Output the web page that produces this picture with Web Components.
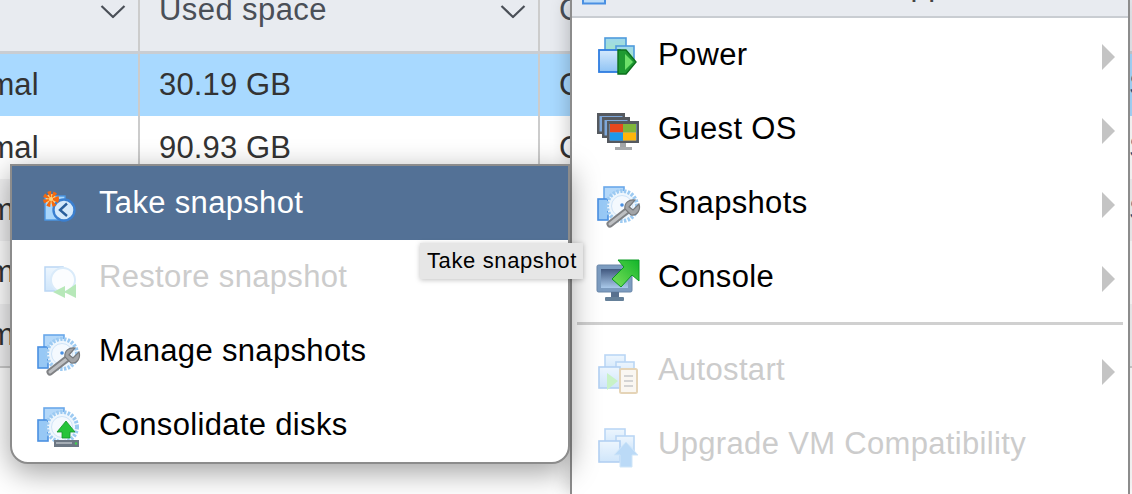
<!DOCTYPE html>
<html>
<head>
<meta charset="utf-8">
<title>VM actions</title>
<style>
    html, body {
        margin: 0;
        height: 100%;
        overflow: hidden;
        background: #fff;
        font-family: "Liberation Sans", Arial, sans-serif;
    }
    #stage {
        position: relative;
        width: 1132px;
        height: 494px;
        overflow: hidden;
    }
    #actions { position: absolute; left: 570px; top: 0; width: 560px; height: 494px; z-index: 1; --item-gap: 19px; }
    #snapshots { position: absolute; left: 10px; top: 164px; width: 560px; z-index: 2; border-radius: 0 0 18px 18px; }
    #tip { position: absolute; left: 420px; top: 243px; z-index: 3; }
</style>
</head>
<body>
<div id="stage">
    <vm-grid>
        <vm-grid-row head>
            <vm-grid-cell sort></vm-grid-cell>
            <vm-grid-cell sort>Used space</vm-grid-cell>
            <vm-grid-cell>C</vm-grid-cell>
            <vm-grid-cell></vm-grid-cell>
        </vm-grid-row>
        <vm-grid-row selected>
            <vm-grid-cell>Normal</vm-grid-cell>
            <vm-grid-cell>30.19 GB</vm-grid-cell>
            <vm-grid-cell>C</vm-grid-cell>
            <vm-grid-cell link>S</vm-grid-cell>
        </vm-grid-row>
        <vm-grid-row>
            <vm-grid-cell>Normal</vm-grid-cell>
            <vm-grid-cell>90.93 GB</vm-grid-cell>
            <vm-grid-cell>C</vm-grid-cell>
            <vm-grid-cell link>S</vm-grid-cell>
        </vm-grid-row>
        <vm-grid-row alt>
            <vm-grid-cell>Normal</vm-grid-cell>
            <vm-grid-cell></vm-grid-cell>
            <vm-grid-cell></vm-grid-cell>
            <vm-grid-cell link>S</vm-grid-cell>
        </vm-grid-row>
        <vm-grid-row>
            <vm-grid-cell>Normal</vm-grid-cell>
            <vm-grid-cell></vm-grid-cell>
            <vm-grid-cell></vm-grid-cell>
            <vm-grid-cell></vm-grid-cell>
        </vm-grid-row>
        <vm-grid-row alt>
            <vm-grid-cell>Normal</vm-grid-cell>
            <vm-grid-cell></vm-grid-cell>
            <vm-grid-cell></vm-grid-cell>
            <vm-grid-cell></vm-grid-cell>
        </vm-grid-row>
    </vm-grid>

    <vm-menu id="actions" square>
        <vm-menu-head>app</vm-menu-head>
        <vm-menu-item icon="power" submenu>Power</vm-menu-item>
        <vm-menu-item icon="guest" submenu>Guest OS</vm-menu-item>
        <vm-menu-item icon="manage" submenu>Snapshots</vm-menu-item>
        <vm-menu-item icon="console" submenu>Console</vm-menu-item>
        <vm-menu-sep></vm-menu-sep>
        <vm-menu-item icon="autostart" submenu disabled>Autostart</vm-menu-item>
        <vm-menu-item icon="upgrade" disabled>Upgrade VM Compatibility</vm-menu-item>
    </vm-menu>

    <vm-menu id="snapshots">
        <vm-menu-item icon="take" active>Take snapshot</vm-menu-item>
        <vm-menu-item icon="restore" disabled>Restore snapshot</vm-menu-item>
        <vm-menu-item icon="manage">Manage snapshots</vm-menu-item>
        <vm-menu-item icon="consolidate">Consolidate disks</vm-menu-item>
    </vm-menu>

    <vm-tooltip id="tip">Take snapshot</vm-tooltip>
</div>

<script>
// shared pieces of the icons
const DEFS = `
    <defs>
        <linearGradient id="pg" x1="0" y1="0" x2="0" y2="1"><stop offset="0" stop-color="#d4e9fc"/><stop offset="1" stop-color="#8fc3f4"/></linearGradient>
        <linearGradient id="pgreen" x1="0" y1="0" x2="0" y2="1"><stop offset="0" stop-color="#9fd8ee"/><stop offset="1" stop-color="#a6e8bc"/></linearGradient>
        <linearGradient id="scr" x1="0" y1="0" x2="0" y2="1"><stop offset="0" stop-color="#41587f"/><stop offset="1" stop-color="#a9c9ea"/></linearGradient>
        <linearGradient id="arr" x1="0" y1="1" x2="1" y2="0"><stop offset="0" stop-color="#7ce05a"/><stop offset="1" stop-color="#12b52a"/></linearGradient>
    </defs>`;

const PAGES = `
    <rect x="7" y="1" width="20" height="17" fill="url(#pg)" stroke="#5c9fe6" stroke-width="1.6"/>
    <rect x="18" y="8" width="18" height="16" fill="url(#pg)" stroke="#5c9fe6" stroke-width="1.6"/>
    <rect x="1" y="13" width="21" height="21" fill="url(#pg)" stroke="#4a90e2" stroke-width="1.6"/>`;

const DISK = `
    <rect x="7" y="1" width="20" height="26" fill="#b4d8f9" stroke="#6aa8ea" stroke-width="1.6"/>
    <rect x="1" y="13" width="10" height="21" fill="#97c8f5" stroke="#4a90e2" stroke-width="1.6"/>
    <circle cx="25" cy="20" r="15" fill="#eef6fd" stroke="#9ccaf2" stroke-width="4" stroke-dasharray="2.4 1.4"/>
    <circle cx="25" cy="20" r="10.5" fill="#f4f9fe" stroke="#cfe4f8" stroke-width="1"/>`;

const WRENCH = `
    <path d="M13 38 L31 24" stroke="#808285" stroke-width="7" stroke-linecap="round"/>
    <path d="M13 38 L31 24" stroke="#bdbfc2" stroke-width="3" stroke-linecap="round"/>
    <path d="M42 18 L36 24 L32 21 L38 14 C32 13 27 17 28 23 L34 29 C40 30 44 24 42 18 Z" fill="#a2a4a7" stroke="#77797c" stroke-width="1.2"/>
    <circle cx="25" cy="19" r="1.8" fill="#4a90e2"/>`;

const monitor = (x, y, w, h) => `
    <rect x="${x}" y="${y}" width="${w}" height="${h}" fill="#55595f"/>
    <rect x="${x + 2.5}" y="${y + 3}" width="${w - 5}" height="${h - 5.5}" fill="#7ea7da"/>`;

const ICONS = {
    power: `<g transform="translate(1,3)">
        <rect x="7" y="1" width="21" height="17" fill="url(#pgreen)" stroke="#4f9bdc" stroke-width="1.6"/>
        <rect x="18" y="9" width="18" height="15" fill="url(#pgreen)" stroke="#4f9bdc" stroke-width="1.6"/>
        <rect x="1" y="13" width="21" height="22" fill="url(#pg)" stroke="#2f7de0" stroke-width="1.8"/>
        <path d="M20 13 H28 L38 25 L28 37 H20 Z" fill="#1f9a32" stroke="#0d6f1d" stroke-width="1.4"/>
        <path d="M27 17 L35 25 L27 33 Z" fill="#6ee06a"/>
    </g>`,
    guest: `<g transform="translate(0,4)">
        ${monitor(0, 1, 28, 21)}
        ${monitor(5, 5, 28, 21)}
        ${monitor(10, 9, 32, 22)}
        <rect x="23" y="31" width="6" height="4" fill="#a2a4a6"/>
        <rect x="18" y="35" width="17" height="3" fill="#a8aaac"/>
        <rect x="13" y="12" width="13" height="8.5" fill="#e7481e"/>
        <rect x="26" y="12" width="13" height="8.5" fill="#7fb53a"/>
        <rect x="13" y="20.5" width="13" height="8" fill="#1d98ea"/>
        <rect x="26" y="20.5" width="13" height="8" fill="#ffb50a"/>
    </g>`,
    manage: `<g transform="translate(0,4)">${DISK}${WRENCH}</g>`,
    console: `<g transform="translate(0,4)">
        <rect x="0" y="5" width="35" height="27" rx="1.5" fill="#7c9cc0" stroke="#6a87a8"/>
        <rect x="4" y="9" width="27" height="19" fill="url(#scr)"/>
        <rect x="14" y="32" width="8" height="5" fill="#58718f"/>
        <rect x="8" y="37" width="19" height="4" rx="1" fill="#658099"/>
        <path d="M21 0 H42 V21 L35 15 L24 27 L15 19 L27 7 Z" fill="url(#arr)" stroke="#0b9a22"/>
    </g>`,
    autostart: `<g transform="translate(1,5)" opacity=".42">
        ${PAGES}
        <path d="M9 19 L20 27 L9 36 Z" fill="#7ce07a"/>
        <rect x="22" y="15" width="17" height="24" rx="1.5" fill="#f3ecdf" stroke="#c29a55" stroke-width="2"/>
        <path d="M26 22 H35 M26 27 H35 M26 32 H35" stroke="#999" stroke-width="2"/>
    </g>`,
    upgrade: `<g transform="translate(1,5)" opacity=".42">
        ${PAGES}
        <path d="M28 14 L40 27 H34 V39 H22 V27 H16 Z" fill="#5ea8ec" stroke="#8fc3f0"/>
    </g>`,
    take: `<g transform="translate(6,9)">
        <rect x="2" y="5" width="20" height="24" fill="#a9d6fb" stroke="#4b97e4" stroke-width="1.4"/>
        <circle cx="21" cy="19" r="10.5" fill="#d5e9fb" stroke="#3a7fd0" stroke-width="2.4"/>
        <path d="M24 12.5 L17 19 L24 25" fill="none" stroke="#2a5f9c" stroke-width="2.4"/>
        <circle cx="8" cy="8" r="5" fill="#ffd27a" stroke="#f4690f" stroke-width="6" stroke-dasharray="2.6 1.5"/>
    </g>`,
    restore: `<g transform="translate(6,8)" opacity=".42">
        <rect x="2" y="3" width="18" height="24" fill="url(#pg)" stroke="#5c9fe6" stroke-width="1.5"/>
        <circle cx="20" cy="16" r="12" fill="#f6fbff" stroke="#a6cff2" stroke-width="2"/>
        <path d="M22 22 V34 L10 28 Z M33 20 V34 L21 28 Z" fill="#55c95a"/>
    </g>`,
    consolidate: `<g transform="translate(0,3)">
        ${DISK}
        <path d="M29 14 L38 25 H33 V31 H25 V25 H20 Z" fill="#25c43a" stroke="#11962a" stroke-width=".8"/>
        <rect x="17" y="33" width="25" height="7" fill="#6c7783"/>
        <rect x="19" y="35" width="16" height="2" fill="#a5adb5"/>
        <circle cx="39" cy="36.5" r="1.2" fill="#3fd050"/>
    </g>`
};

class VmIcon extends HTMLElement {
    constructor() {
        super();
        const shadowRoot = this.attachShadow({ mode: 'open' });
        shadowRoot.innerHTML = `
            <style>
                :host { display: block; width: 42px; height: 42px; flex: none; }
                svg { display: block; overflow: visible; filter: blur(.6px); }
            </style>
            <svg width="42" height="42" viewBox="0 0 42 42" fill="none">${DEFS}${ICONS[this.getAttribute("name")] || ''}</svg>
        `;
    }
}

class VmGrid extends HTMLElement {
    constructor() {
        super();
        const shadowRoot = this.attachShadow({ mode: 'open' });
        shadowRoot.innerHTML = `
            <style>
                :host {
                    display: block;
                    /* first column and the header start above and left of the visible part */
                    margin: -31px 0 0 -81px;
                    width: 1300px;
                    font-size: 31px;
                    letter-spacing: .15px;
                    color: #333;
                    border-bottom: 2px solid #ccc;
                }
            </style>
            <slot></slot>
        `;
    }
}

class VmGridRow extends HTMLElement {
    constructor() {
        super();
        const shadowRoot = this.attachShadow({ mode: 'open' });
        shadowRoot.innerHTML = `
            <style>
                :host {
                    display: grid;
                    grid-template-columns: 221px 400px 570px 109px;
                    height: 62.4px;
                    background: #fff;
                }
                :host([selected]) { background: #a8d9ff; }
                :host([alt]) { background: #f3f3f4; }
                :host([head]) {
                    height: 82px;
                    background: #e8ebf0;
                    color: #4a4f57;
                    letter-spacing: .42px;
                    border-bottom: 3px solid #c9cdd2;
                }
            </style>
            <slot></slot>
        `;
    }
}

class VmGridCell extends HTMLElement {
    constructor() {
        super();
        const shadowRoot = this.attachShadow({ mode: 'open' });
        shadowRoot.innerHTML = `
            <style>
                :host {
                    display: flex;
                    align-items: center;
                    justify-content: space-between;
                    padding: 0 12px 0 19px;
                    border-right: 2px solid #ccc;
                    white-space: nowrap;
                    overflow: hidden;
                    min-width: 0;
                }
                :host([link]) { color: #1a4a80; }
                svg { display: none; flex: none; transform: translateY(1.5px); }
                :host([sort]) svg { display: block; }
            </style>
            <span><slot></slot></span>
            <svg width="26" height="14" viewBox="0 0 26 14" fill="none"><path d="M1.5 1.5 L13 12.5 L24.5 1.5" stroke="#4a4f57" stroke-width="2.2"/></svg>
        `;
    }
}

class VmMenu extends HTMLElement {
    constructor() {
        super();
        const shadowRoot = this.attachShadow({ mode: 'open' });
        shadowRoot.innerHTML = `
            <style>
                :host {
                    display: block;
                    box-sizing: border-box;
                    background: #fff;
                    border: 2px solid #8c8c8c;
                    font-size: 31px;
                    letter-spacing: .33px;
                    color: #000;
                    box-shadow: 0 8px 30px rgba(0, 0, 0, .38);
                }
                :host([square]) {
                    border-width: 0 2px;
                    box-shadow: -3px 0 16px rgba(0, 0, 0, .2);
                }
                .clip { overflow: hidden; border-radius: inherit; }
            </style>
            <div class="clip" style="border-radius: inherit"><slot></slot></div>
        `;
    }
}

class VmMenuHead extends HTMLElement {
    constructor() {
        super();
        const shadowRoot = this.attachShadow({ mode: 'open' });
        shadowRoot.innerHTML = `
            <style>
                :host {
                    display: flex;
                    align-items: flex-start;
                    height: 16px;
                    overflow: hidden;
                    background: #e8ebf0;
                    border-bottom: 2px solid #c9cdd2;
                    color: #444;
                }
                svg { display: block; flex: none; margin-left: 10px; }
                span { margin: -31px 0 0 287px; line-height: 31px; }
            </style>
            <svg width="24" height="5" viewBox="0 0 24 5" fill="none"><path d="M1 -3 V3.5 H23 V-3" fill="#bcdcf8" stroke="#4a90e2" stroke-width="2"/></svg>
            <span><slot></slot></span>
        `;
    }
}

class VmMenuItem extends HTMLElement {
    constructor() {
        super();
        const shadowRoot = this.attachShadow({ mode: 'open' });
        //language=HTML
        shadowRoot.innerHTML = `
            <style>
                :host {
                    display: flex;
                    align-items: center;
                    gap: var(--item-gap, 20px);
                    height: 74px;
                    padding: 0 13px 0 25px;
                    white-space: nowrap;
                }
                :host([active]) { background: #537196; color: #fff; }
                :host([disabled]) { color: #ccc; }
                .label { flex: 1; }
                .arrow {
                    display: none;
                    width: 0;
                    height: 0;
                    margin-top: 4px;
                    border-left: 13px solid #c4c4c4;
                    border-top: 13px solid transparent;
                    border-bottom: 13px solid transparent;
                }
                :host([submenu]) .arrow { display: block; }
            </style>
            <vm-icon name="${ this.getAttribute("icon") }"></vm-icon>
            <span class="label"><slot></slot></span>
            <span class="arrow"></span>
        `;
    }
}

class VmMenuSep extends HTMLElement {
    constructor() {
        super();
        const shadowRoot = this.attachShadow({ mode: 'open' });
        shadowRoot.innerHTML = `
            <style>
                :host {
                    display: block;
                    height: 3px;
                    margin: 8px 5px 8px;
                    background: #d0d0d0;
                }
            </style>
        `;
    }
}

class VmTooltip extends HTMLElement {
    constructor() {
        super();
        const shadowRoot = this.attachShadow({ mode: 'open' });
        shadowRoot.innerHTML = `
            <style>
                :host {
                    display: flex;
                    align-items: center;
                    box-sizing: border-box;
                    height: 36px;
                    padding: 0 6px 0 7px;
                    background: #e6e6e6;
                    color: #000;
                    font-size: 22px;
                    letter-spacing: .62px;
                    white-space: nowrap;
                    box-shadow: 0 1px 5px rgba(0, 0, 0, .25);
                }
            </style>
            <slot></slot>
        `;
    }
}

customElements.define("vm-icon", VmIcon);
customElements.define("vm-grid", VmGrid);
customElements.define("vm-grid-row", VmGridRow);
customElements.define("vm-grid-cell", VmGridCell);
customElements.define("vm-menu", VmMenu);
customElements.define("vm-menu-head", VmMenuHead);
customElements.define("vm-menu-item", VmMenuItem);
customElements.define("vm-menu-sep", VmMenuSep);
customElements.define("vm-tooltip", VmTooltip);
</script>
</body>
</html>
